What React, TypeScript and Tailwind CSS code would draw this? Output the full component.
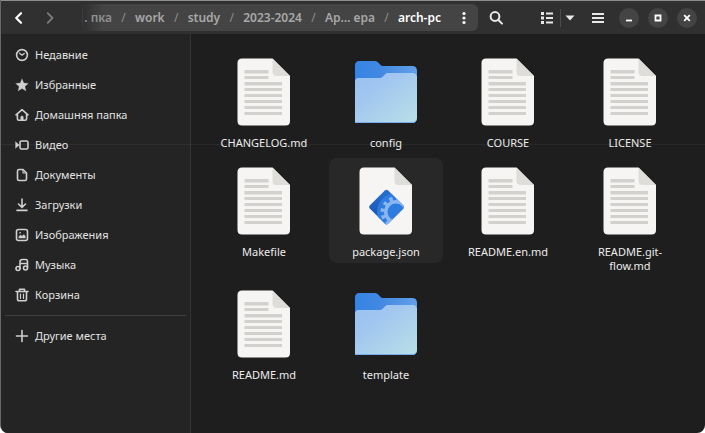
import type { ReactNode } from "react";

const stroke = {
  fill: "none",
  stroke: "currentColor",
  strokeWidth: 1.6,
  strokeLinecap: "round",
  strokeLinejoin: "round",
} as const;

function Glyph({ children }: { children: ReactNode }) {
  return (
    <svg viewBox="0 0 14 14" className="size-3.5 shrink-0 text-[#cfcfcf]" aria-hidden="true" {...stroke}>
      {children}
    </svg>
  );
}

const places: { label: string; icon: ReactNode }[] = [
  {
    label: "Недавние",
    icon: (
      <>
        <circle cx="7" cy="7" r="5.4" />
        <path d="M4.6 5.2 7 7.2l2.2-1.8" strokeWidth="1.3" />
      </>
    ),
  },
  {
    label: "Избранные",
    icon: (
      <path
        d="M7 .8 8.8 5l4.6.4-3.5 3 1.1 4.5L7 10.5 3 12.9l1.1-4.5-3.5-3L5.2 5Z"
        fill="currentColor"
        strokeWidth="0.2"
      />
    ),
  },
  {
    label: "Домашняя папка",
    icon: (
      <>
        <path d="M1 6.8 7 1.7l6 5.1M2.4 6v4.8q0 1.5 1.5 1.5h6.2q1.5 0 1.5-1.5V6" />
        <path d="M5.8 12V9q0-1 1.2-1t1.2 1v3" fill="currentColor" strokeWidth="0.6" />
      </>
    ),
  },
  {
    label: "Видео",
    icon: (
      <>
        <rect x="5" y="3" width="8" height="8" rx="1.5" />
        <path d="m.7 4 3.5 3-3.5 3Z" fill="currentColor" strokeWidth="0.5" />
      </>
    ),
  },
  {
    label: "Документы",
    icon: (
      <>
        <path d="M4 1.5h4l3.5 3.5v6q0 1.5-1.5 1.5H4q-1.5 0-1.5-1.5V3q0-1.5 1.5-1.5Z" />
        <path d="M8 1.7V5h3.3" strokeWidth="1.1" />
      </>
    ),
  },
  { label: "Загрузки", icon: <path d="M7 1v8M3.5 6 7 9.4 10.5 6M2 12.4h10" /> },
  {
    label: "Изображения",
    icon: (
      <>
        <rect x="1.5" y="1.5" width="11" height="11" rx="2" />
        <path d="M3.8 10V8.5L5.5 7l1.5 1 2-1.5 1.4 1.7V10Z" fill="currentColor" strokeWidth="0.3" />
        <circle cx="5" cy="4.8" r=".5" fill="currentColor" strokeWidth="0.5" />
      </>
    ),
  },
  {
    label: "Музыка",
    icon: (
      <>
        <circle cx="3" cy="10.5" r="2" />
        <circle cx="10.5" cy="10" r="2" />
        <path d="M5 10.5V4q0-2.5 2.5-2.5h3q2 0 2 2V10M5 5.5h7.500" />
      </>
    ),
  },
  {
    label: "Корзина",
    icon: (
      <>
        <path d="M1 3.5h12M4.5 3.3V1.3h5v2M2.5 3.8v7.2q0 1.8 1.8 1.8h5.4q1.8 0 1.8-1.8V3.8" />
        <path d="M5.5 6v4.5M8.5 6v4.5" strokeWidth="1.2" />
      </>
    ),
  },
];

const crumbs = ["work", "study", "2023-2024", "Ар… ера"];

function TextDocument() {
  return (
    <svg viewBox="0 0 54 68" className="h-[68px] w-[54px]" aria-hidden="true">
      <path d="M5 .5h30.5L53 18v45q0 4.5-4.5 4.5H5Q.5 67.5.5 63V5Q.5.5 5 .5Z" fill="#f6f5f4" />
      <path d="M35.5.5 53 18H39.5q-4 0-4-4Z" fill="#deddda" />
      <g fill="#d3d1ce">
        <rect x="7.5" y="12" width="24" height="3.5" />
        <rect x="7.5" y="18" width="24" height="3" />
        <rect x="7.5" y="24" width="37.5" height="3.5" />
        <rect x="7.5" y="30" width="37.5" height="3" />
        <rect x="7.5" y="36" width="37.5" height="3" />
        <rect x="7.5" y="42" width="37.5" height="3" />
        <rect x="7.5" y="48" width="37.5" height="3" />
        <rect x="7.5" y="54" width="37.5" height="3" />
      </g>
    </svg>
  );
}

function JsonDocument() {
  return (
    <svg viewBox="0 0 54 68" className="h-[68px] w-[54px]" aria-hidden="true">
      <defs>
        <clipPath id="diamond">
          <path d="M25.8 23.5q1.7-1.7 3.4 0L44 38.3q1.7 1.7 0 3.4L29.2 56.5q-1.7 1.7-3.4 0L11 41.7q-1.7-1.7 0-3.4Z" />
        </clipPath>
        <linearGradient id="diamondFill" x1="0" y1="0" x2="0" y2="1">
          <stop offset="0" stopColor="#2a72d2" />
          <stop offset=".6" stopColor="#1c5cb6" />
        </linearGradient>
      </defs>
      <path d="M5 .5h30.5L53 18v45q0 4.5-4.5 4.5H5Q.5 67.5.5 63V5Q.5.5 5 .5Z" fill="#f6f5f4" />
      <path d="M35.5.5 53 18H39.5q-4 0-4-4Z" fill="#deddda" />
      <g clipPath="url(#diamond)">
        <path d="M8 20h40v40H8Z" fill="url(#diamondFill)" />
        <circle cx="37" cy="45" r="19" fill="#2f7ce0" />
        <circle cx="37" cy="45" r="12" fill="#8ab6f0" />
        <circle cx="37" cy="45" r="13.5" fill="none" stroke="#8ab6f0" strokeWidth="4" strokeDasharray="3.4 3.66" />
        <circle cx="37" cy="45" r="8.5" fill="#2f7ce0" />
      </g>
    </svg>
  );
}

function Folder() {
  return (
    <svg viewBox="0 0 64 68" className="h-[68px] w-16" aria-hidden="true">
      <defs>
        <linearGradient id="folderBack" x1="0" y1="0" x2="1" y2="0">
          <stop offset="0" stopColor="#3584e4" />
          <stop offset=".4" stopColor="#4188e1" />
          <stop offset="1" stopColor="#62a0ea" />
        </linearGradient>
        <linearGradient id="folderFront" x1="0" y1="0" x2="1" y2="1">
          <stop offset="0" stopColor="#99c1f1" />
          <stop offset=".3" stopColor="#a0c5f0" />
          <stop offset="1" stopColor="#b9dfe8" />
        </linearGradient>
      </defs>
      <path d="M5.5 3H21q2 0 3.5 1.7l2 2.3q1 1 2.5 1h29q5 0 5 5v47q0 5-5 5H1V7.5Q1 3 5.5 3Z" fill="url(#folderBack)" />
      <path d="M5 20h21q1.5 0 2.5-1l3-3q1-1 2.5-1h24q5 0 5 5v40q0 5-5 5H1V24q0-4 4-4Z" fill="#78aeea" />
      <path d="M5 20h21q1.5 0 2.5-1l3-3q1-1 2.5-1h24q5 0 5 5v39q0 5-5 5H1V24q0-4 4-4Z" fill="url(#folderFront)" />
    </svg>
  );
}

type Kind = "text" | "json" | "folder";

const files: { name: string; kind: Kind }[] = [
  { name: "CHANGELOG.md", kind: "text" },
  { name: "config", kind: "folder" },
  { name: "COURSE", kind: "text" },
  { name: "LICENSE", kind: "text" },
  { name: "Makefile", kind: "text" },
  { name: "package.json", kind: "json" },
  { name: "README.en.md", kind: "text" },
  { name: "README.git-flow.md", kind: "text" },
  { name: "README.md", kind: "text" },
  { name: "template", kind: "folder" },
];

function FileTile({ name, kind }: { name: string; kind: Kind }) {
  return (
    <button
      type="button"
      className={`flex min-h-[105px] flex-col items-center rounded-lg px-2 pt-[9px] pb-1 ${kind === "json" ? "bg-[#282828]" : ""}`}
    >
      {kind === "folder" ? <Folder /> : kind === "json" ? <JsonDocument /> : <TextDocument />}
      <span className="mt-2.5 max-w-[92px] text-center text-[11px] leading-3.5 text-[#ececec]">{name}</span>
    </button>
  );
}

function WindowButton({ label, children }: { label: string; children: ReactNode }) {
  return (
    <button type="button" aria-label={label} className="grid size-5 place-items-center rounded-full bg-[#444444] text-white">
      <svg viewBox="0 0 8 8" className="size-2" fill="none" stroke="currentColor" strokeWidth="1.8" aria-hidden="true">
        {children}
      </svg>
    </button>
  );
}

function Separator() {
  return <span className="w-[23px] shrink-0 text-center font-normal text-[#8c8c8c]">/</span>;
}

function Header() {
  return (
    <header className="flex h-[34px] shrink-0 items-center border-t border-[#8b8f8f] bg-[#303030] pr-2 pl-2.5 text-[#e8e8e8]">
      <button type="button" aria-label="Назад" className="text-white">
        <svg viewBox="0 0 16 16" className="size-4" {...stroke} strokeWidth="2.2" aria-hidden="true">
          <path d="M10 3.2 5.2 8l4.8 4.8" />
        </svg>
      </button>
      <button type="button" aria-label="Вперёд" className="ml-[15px] text-[#7b7b7b]">
        <svg viewBox="0 0 16 16" className="size-4" {...stroke} strokeWidth="1.8" aria-hidden="true">
          <path d="M5.7 3.2 10.5 8l-4.8 4.8" />
        </svg>
      </button>
      <nav
        aria-label="Путь"
        className="ml-6 flex h-[27px] min-w-0 flex-1 items-center justify-end overflow-hidden rounded-md border-l border-[#3c3c3c] bg-linear-to-r from-[#303030] to-[#444444] to-5% pr-[7px] text-xs font-semibold whitespace-nowrap text-[#a8a8a8]"
      >
        <a href="#home" className="shrink-0 text-[#8f8f8f]">. пка</a>
        {crumbs.map((crumb) => (
          <span key={crumb} className="flex shrink-0 items-center">
            <Separator />
            <a href={`#${crumb}`}>{crumb}</a>
          </span>
        ))}
        <Separator />
        <a href="#arch-pc" className="shrink-0 text-white">arch-pc</a>
        <button type="button" aria-label="Меню папки" className="ml-4 shrink-0 text-white">
          <svg viewBox="0 0 14 14" className="size-3.5" fill="currentColor" aria-hidden="true">
            <circle cx="7" cy="2.5" r="1.6" />
            <circle cx="7" cy="7" r="1.6" />
            <circle cx="7" cy="11.5" r="1.6" />
          </svg>
        </button>
      </nav>
      <button type="button" aria-label="Поиск" className="ml-2.5">
        <svg viewBox="0 0 16 16" className="size-4" {...stroke} strokeWidth="2" aria-hidden="true">
          <circle cx="7" cy="6.5" r="4.4" />
          <path d="m10.4 10 3.6 3.6" />
        </svg>
      </button>
      <button type="button" aria-label="Список" className="ml-9">
        <svg viewBox="0 0 14 14" className="size-3.5" fill="currentColor" aria-hidden="true">
          <path d="M1 1h3v3H1zM1 5.5h3v3H1zM1 10h3v3H1zM6 1.5h7v2H6zM6 6h7v2H6zM6 10.5h7v2H6z" />
        </svg>
      </button>
      <span className="ml-1.5 h-[18px] w-px bg-[#4c4c4c]" />
      <button type="button" aria-label="Параметры вида" className="ml-1">
        <svg viewBox="0 0 10 6" className="h-1.5 w-2.5" fill="currentColor" aria-hidden="true">
          <path d="M.5.5h9L5 5.5Z" />
        </svg>
      </button>
      <button type="button" aria-label="Главное меню" className="ml-4">
        <svg viewBox="0 0 14 14" className="size-3.5" fill="currentColor" aria-hidden="true">
          <path d="M1 2h12v2H1zM1 6h12v2H1zM1 10h12v2H1z" />
        </svg>
      </button>
      <div className="ml-3.5 flex gap-[9px]">
        <WindowButton label="Свернуть">
          <path d="M1 6.5h6" />
        </WindowButton>
        <WindowButton label="Развернуть">
          <path d="M1.5 1.5h5v5h-5Z" />
        </WindowButton>
        <WindowButton label="Закрыть">
          <path d="m1.2 1.2 5.6 5.6m0-5.6L1.2 6.8" />
        </WindowButton>
      </div>
    </header>
  );
}

export default function App() {
  return (
    <div className="relative flex min-h-screen flex-col overflow-hidden rounded-b-lg border-l border-[#666969] bg-[#1e1e1e] font-['Noto_Sans',sans-serif]">
      <Header />
      <div className="flex flex-1">
        <aside className="w-[190px] shrink-0 border-r border-[#343434] bg-[#242424] pt-1.5 text-[11px] text-[#e2e2e2]">
          <nav aria-label="Места">
            {places.map((place) => (
              <a key={place.label} href={`#${place.label}`} className="flex h-[30px] items-center gap-1.5 pl-3.5">
                <Glyph>{place.icon}</Glyph>
                {place.label}
              </a>
            ))}
            <hr className="mx-1 my-[5px] border-[#414141]" />
            <a href="#other" className="flex h-[30px] items-center gap-1.5 pl-3.5">
              <Glyph>
                <path d="M7 1.5v11M1.5 7h11" />
              </Glyph>
              Другие места
            </a>
          </nav>
        </aside>
        <main className="min-w-0 flex-1 pt-[15px] pr-[18px] pb-4 pl-4">
          <div className="grid grid-cols-4 items-start gap-x-2 gap-y-1">
            {files.map((file) => (
              <FileTile key={file.name} {...file} />
            ))}
          </div>
        </main>
      </div>
      <div className="pointer-events-none absolute inset-x-0 top-36 h-px bg-white/5" />
    </div>
  );
}
